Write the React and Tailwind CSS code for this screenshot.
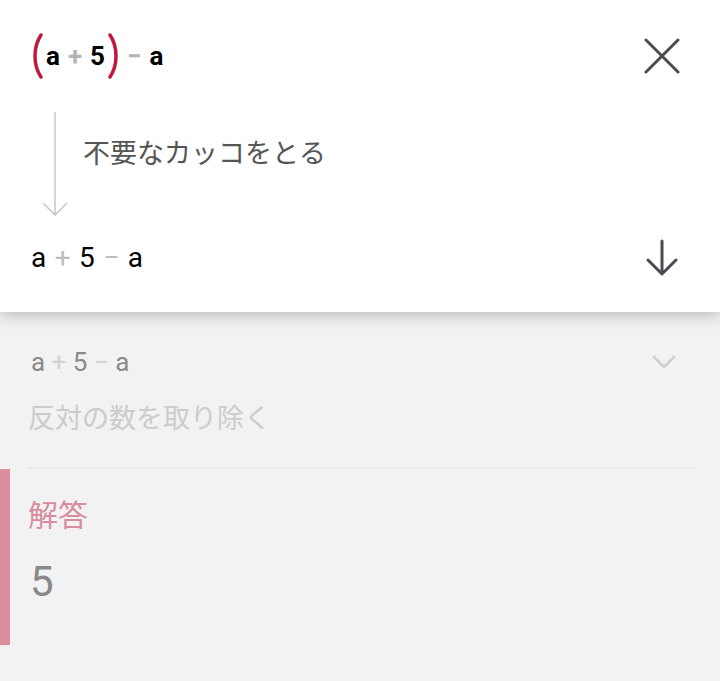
import React from 'react';

const FONT = { fontFamily: 'Roboto, "Noto Sans CJK JP", sans-serif' };

function Paren({ flip }) {
  return (
    <svg width="12" height="46" viewBox="0 0 12 46" className={flip ? '-scale-x-100' : ''}>
      <path d="M10 2 C2 14 2 32 10 44" fill="none" stroke="#c0183f" strokeWidth="3.5" strokeLinecap="round" />
    </svg>
  );
}

function CloseIcon() {
  return (
    <svg width="36" height="36" viewBox="0 0 36 36">
      <path d="M2 2 L34 34 M34 2 L2 34" stroke="#4b4c51" strokeWidth="3" strokeLinecap="round" />
    </svg>
  );
}

function ArrowDown() {
  return (
    <svg width="34" height="38" viewBox="0 0 34 38">
      <path d="M17 2 V35 M3 21 L17 35 L31 21" fill="none" stroke="#4b4c51" strokeWidth="3" strokeLinecap="round" strokeLinejoin="round" />
    </svg>
  );
}

export default function App() {
  return (
    <div className="w-[720px] h-[681px] bg-[#f2f2f2] overflow-hidden" style={FONT}>
      {/* current step card */}
      <div className="bg-white shadow-[0_4px_14px_rgba(0,0,0,0.22)] relative z-10 pb-[12px]">
        <div className="h-[112px] pl-[31px] pr-[40px] flex items-center justify-between">
          <div className="flex items-center text-[26px] font-bold text-black leading-none">
            <Paren />
            <span className="ml-[3px]">a</span>
            <span className="ml-[8px] text-[#b5b5b5]">+</span>
            <span className="ml-[8px]">5</span>
            <span className="ml-[3px]"><Paren flip /></span>
            <span className="ml-[7px] text-[#b5b5b5]">−</span>
            <span className="ml-[8px]">a</span>
          </div>
          <CloseIcon />
        </div>

        <div className="h-[104px] flex">
          <div className="w-[83px] pl-[41px]">
            <svg width="30" height="104" viewBox="0 0 30 104">
              <path d="M14 0 V103 M2 91 L14 103 L26 91" fill="none" stroke="#c8c8c8" strokeWidth="1.5" />
            </svg>
          </div>
          <div className="pt-[27px] text-[27px] leading-[30px] text-[#555]">不要なカッコをとる</div>
        </div>

        <div className="h-[84px] pl-[31px] pr-[41px] flex items-center justify-between">
          <div className="text-[28px] text-black leading-none [word-spacing:1.5px]">
            a <span className="text-[#bdbdbd]">+</span> 5 <span className="text-[#bdbdbd]">−</span> a
          </div>
          <ArrowDown />
        </div>
      </div>

      {/* next step (dimmed) */}
      <div className="pl-[28px] pr-[24px] pt-[37px]">
        <div className="flex items-center justify-between pr-[20px]">
          <div className="text-[26px] leading-none text-[#8a8a8a] pl-[3px]">
            a <span className="text-[#d2d2d2]">+</span> 5 <span className="text-[#d2d2d2]">−</span> a
          </div>
          <svg width="24" height="14" viewBox="0 0 24 14">
            <path d="M2 2 L12 12 L22 2" fill="none" stroke="#d0d0d0" strokeWidth="2.5" strokeLinecap="round" strokeLinejoin="round" />
          </svg>
        </div>
        <div className="mt-[29px] text-[27px] leading-[30px] text-[#cccccc]">反対の数を取り除く</div>
        <div className="h-[2px] mt-[33px] bg-[#e9e9e9] -ml-[1px]" />
      </div>

      {/* answer */}
      <div className="flex h-[176px]">
        <div className="w-[10px] bg-[#dc8e9f]" />
        <div className="pl-[18px] pt-[30px]">
          <div className="text-[30px] leading-[34px] text-[#d98c9e]">解答</div>
          <div className="mt-[28px] text-[42px] leading-none text-[#888] pl-[2px]">5</div>
        </div>
      </div>
    </div>
  );
}
